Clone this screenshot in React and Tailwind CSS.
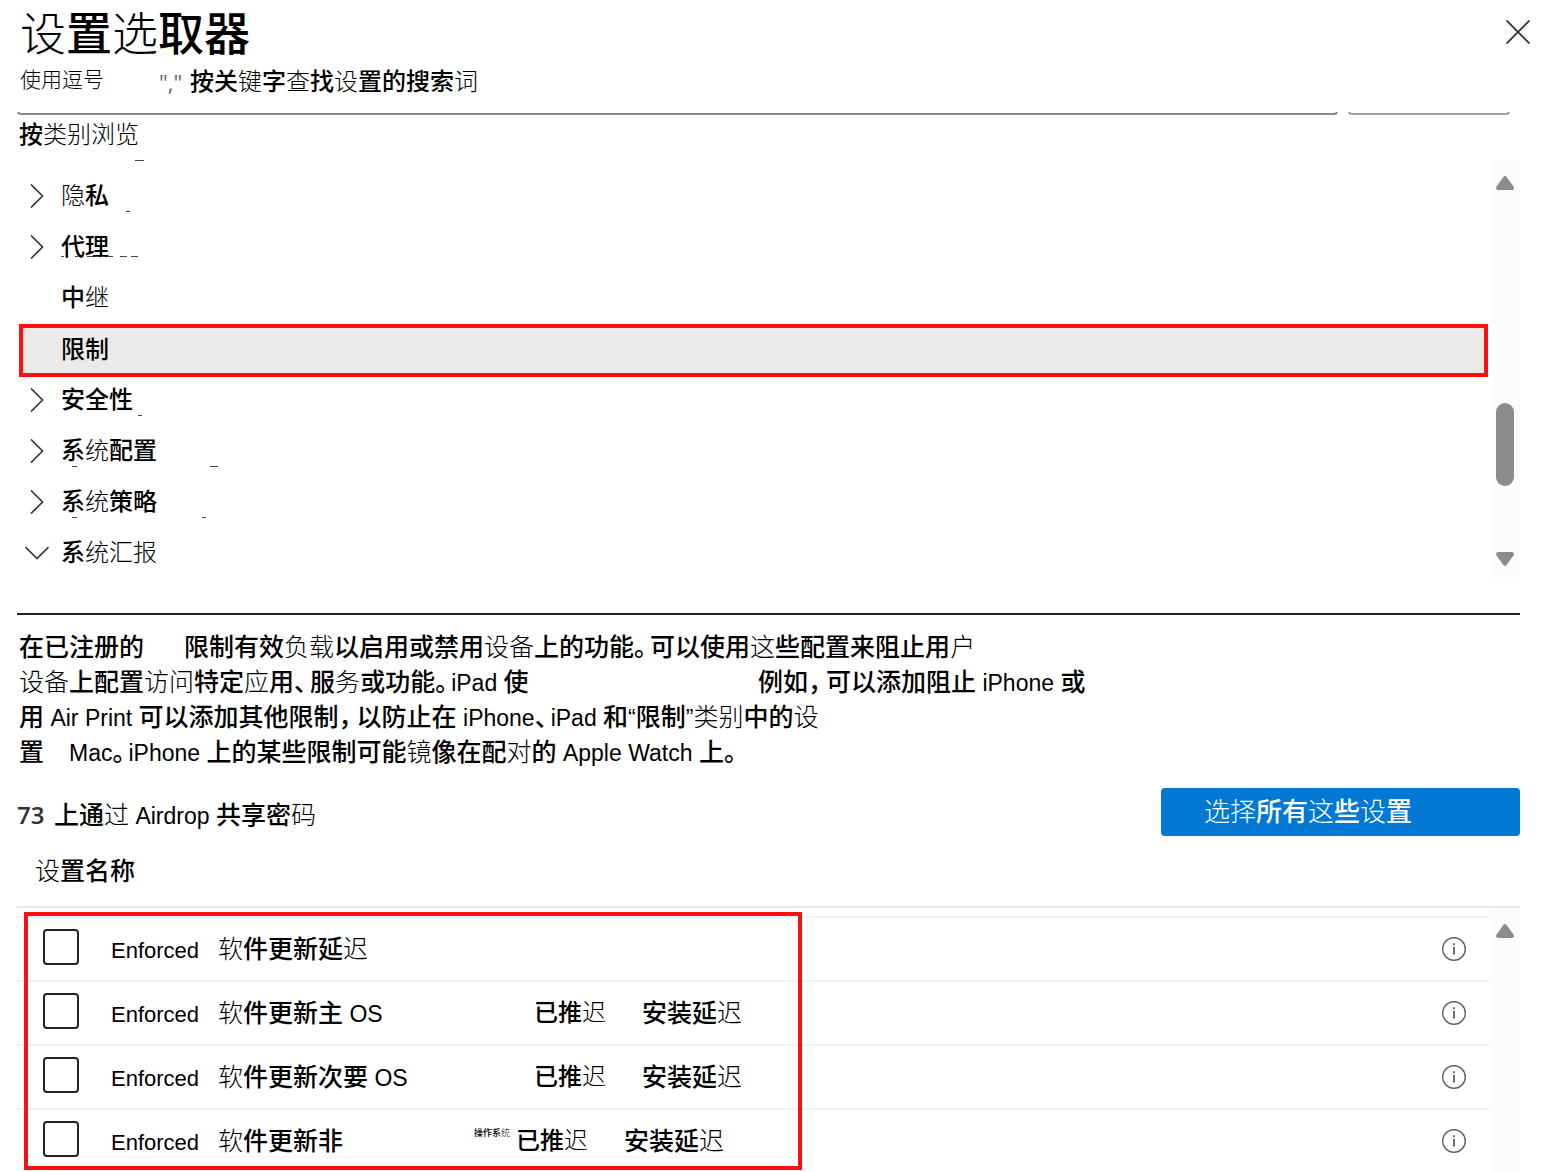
import React from 'react';
import clsx from 'clsx';

const LIGHT = /([设选键查词类别浏览隐继统汇报负载备访问应务这户镜对过码择软迟]+)/;
const TOKENS = /( ?[A-Za-z“”]+(?: [A-Za-z]+)* ?|[。、，])/;

function Han({ text }) {
  return text.split(LIGHT).map((part, i) =>
    i % 2 ? <span key={i} className="font-light">{part}</span> : part
  );
}

function Mixed({ text }) {
  return text.split(TOKENS).map((part, i) => {
    if (i % 2 === 0) return <Han key={i} text={part} />;
    if ('。、，'.includes(part)) {
      return (
        <span
          key={i}
          className={clsx("inline-block leading-none [font-feature-settings:'halt']", part === '，' ? 'w-[18px]' : 'w-4')}
        >
          {part}
        </span>
      );
    }
    return <span key={i} className="text-[23px] font-normal leading-none">{part}</span>;
  });
}

const categories = [
  { name: '隐私', icon: 'right', marks: 'M135-11h9M126 40h4' },
  { name: '代理', icon: 'right', marks: 'M61 34h3M75 34h3M87 34h6M95 34h4M101 34h4M107 34h6M120 34h7M131 34h7' },
  { name: '中继' },
  { name: '限制', selected: true },
  { name: '安全性', icon: 'right', marks: 'M138 40h4' },
  { name: '系统配置', icon: 'right', marks: 'M72 40h5M210 40h8' },
  { name: '系统策略', icon: 'right', marks: 'M72 40h5M202 40h4' },
  { name: '系统汇报', icon: 'down' },
];

const settings = [
  { id: 'delay', name: '软件更新延迟' },
  { id: 'major', name: '软件更新主 OS', width: 'w-[316px]', state: '已推迟', action: '安装延迟' },
  { id: 'minor', name: '软件更新次要 OS', width: 'w-[316px]', state: '已推迟', action: '安装延迟' },
  { id: 'non', name: '软件更新非', width: 'w-[256px]', note: '操作系统', state: '已推迟', action: '安装延迟' },
];

function Chevron({ direction }) {
  return (
    <svg viewBox="0 0 24 24" className="size-6 shrink-0" fill="none" stroke="#3b3a39" strokeWidth="1.7">
      <path d={direction === 'down' ? 'M.5 6 12 17.500 23.500 6' : 'M6 .5 17.500 12 6 23.500'} />
    </svg>
  );
}

function Arrow({ down }) {
  return (
    <svg viewBox="0 0 18 14" className={clsx('h-[14px] w-[18px]', down && 'rotate-180')} fill="#8b8b8b">
      <path d="M7.200 1.200Q9-1 10.800 1.200L17.500 10.500Q18.800 13.800 15.800 14H2.200Q-.8 13.800.5 10.500Z" />
    </svg>
  );
}

function InfoIcon() {
  return (
    <svg viewBox="0 0 24 24" className="size-6" fill="none" stroke="#605e5c">
      <circle cx="12" cy="12" r="11.300" strokeWidth="1.400" />
      <path d="M12 9.800V17.500M12 6.300V8" strokeWidth="1.800" />
    </svg>
  );
}

function CategoryRow({ item }) {
  return (
    <li
      className={clsx(
        'relative flex items-center pb-[2px]',
        item.selected
          ? '-mb-0.5 ml-0.5 mr-0.5 h-[53px] border-4 border-[#ff1010] bg-[#ebeae9] pl-[38px]'
          : 'h-[51px] pl-2'
      )}
    >
      {!item.selected && <span className="mr-3 size-6">{item.icon && <Chevron direction={item.icon} />}</span>}
      <button type="button" className="text-2xl font-medium leading-8"><Han text={item.name} /></button>
      {item.marks && (
        <svg viewBox="17 0 400 51" className="pointer-events-none absolute left-0 top-0 h-[51px] w-[400px] overflow-visible" stroke="#444">
          <path d={item.marks} transform="translate(0 .5)" />
        </svg>
      )}
    </li>
  );
}

export default function App() {
  return (
    <main className="bg-white pl-[17px] pr-[22px] font-['Liberation_Sans','Noto_Sans_CJK_SC',sans-serif] font-medium text-black">
      <header className="flex items-start justify-between">
        <div className="pl-[3px] pt-[9px]">
          <h1 className="text-[46px] font-medium leading-[50px]"><Han text="设置选取器" /></h1>
          <p className="flex h-[53px] items-start pt-[5px] text-2xl leading-9">
            <span className="w-[139px] text-[21px] font-light leading-8">使用逗号</span>
            <span className="w-[31px] font-['Open_Sans',sans-serif] text-[22px] font-normal text-[#666]">","</span>
            <span><Han text="按关键字查找设置的搜索词" /></span>
          </p>
        </div>
        <button type="button" aria-label="关闭" className="-mr-[10px] mt-5">
          <svg viewBox="0 0 24 24" className="size-6" stroke="#323130" strokeWidth="1.8">
            <path d="M.5.5 23.500 23.500M23.500.5.5 23.500" />
          </svg>
        </button>
      </header>

      <div className="flex h-[3px] items-end gap-[10px] overflow-hidden pr-[10px]">
        <input aria-label="搜索" className="h-10 min-w-0 flex-1 rounded-[4px] border-2 border-[#8a8886]" />
        <button type="button" aria-label="查找" className="h-10 w-[162px] rounded-[4px] border-2 border-[#a19f9d]" />
      </div>

      <h2 className="h-[45px] pl-[2px] pt-[2px] text-2xl font-medium leading-9"><Han text="按类别浏览" /></h2>

      <div className="flex h-[422px]">
        <ul className="relative flex-1 pt-[11px]">
          {categories.map((item) => <CategoryRow key={item.name} item={item} />)}
        </ul>
        <div className="flex w-[30px] flex-col items-center bg-[#fcfcfc] pb-4 pt-4">
          <Arrow />
          <div className="mt-[213px] h-[83px] w-[18px] rounded-full bg-[#8b8b8b]" />
          <div className="mt-auto"><Arrow down /></div>
        </div>
      </div>

      <hr className="mt-[31px] border-t-2 border-[#252423]" />

      <div className="mt-[15px] grid auto-rows-[35px] whitespace-pre pl-[2px] text-[25px] leading-[35px]">
        <p className="flex">
          <span className="w-[165px]">在已注册的</span>
          <span><Mixed text="限制有效负载以启用或禁用设备上的功能。可以使用这些配置来阻止用户" /></span>
        </p>
        <p className="flex">
          <span className="w-[739px]"><Mixed text="设备上配置访问特定应用、服务或功能。iPad 使" /></span>
          <span><Mixed text="例如，可以添加阻止 iPhone 或" /></span>
        </p>
        <p><Mixed text="用 Air Print 可以添加其他限制，以防止在 iPhone、iPad 和“限制”类别中的设" /></p>
        <p className="flex">
          <span className="w-[50px]">置</span>
          <span><Mixed text="Mac。iPhone 上的某些限制可能镜像在配对的 Apple Watch 上。" /></span>
        </p>
      </div>

      <div className="mt-[18px] flex h-12 items-center justify-between">
        <p className="flex items-center pt-[6px] text-[25px] leading-9">
          <span className="w-[37px] font-['Open_Sans',sans-serif] text-2xl font-semibold text-[#323130]">73</span>
          <span><Mixed text="上通过 Airdrop 共享密码" /></span>
        </p>
        <button type="button" className="h-12 w-[359px] rounded-[4px] bg-[#0078d4] pl-[43px] text-left text-[26px] font-medium leading-9 text-white">
          <Han text="选择所有这些设置" />
        </button>
      </div>

      <section className="relative">
        <table className="w-full border-separate border-spacing-0">
          <thead>
            <tr>
              <th colSpan={3} className="h-[72px] border-b-2 border-[#eaeaea] pl-[18px] text-left text-[25px] font-medium leading-9">
                <Han text="设置名称" />
              </th>
            </tr>
            <tr aria-hidden="true"><td colSpan={3} className="h-2" /></tr>
          </thead>
          <tbody>
            {settings.map((row) => (
              <tr key={row.id} className="h-16">
                <td className="w-[94px] border-t-2 border-[#f1f1f1] pb-1 pl-[26px]">
                  <input id={row.id} type="checkbox" className="block size-9 appearance-none rounded-[4px] border-2 border-[#252423] bg-white" />
                </td>
                <td className="border-t-2 border-[#f1f1f1]">
                  <label htmlFor={row.id} className="flex items-center whitespace-pre text-[25px] leading-9">
                    <span className="w-[107px] pt-1 text-[22px] font-normal">Enforced</span>
                    <span className={row.width}><Mixed text={row.name} /></span>
                    {row.note && <span className="-mt-4 w-[42px] text-[9px] leading-5"><Han text={row.note} /></span>}
                    {row.state && <span className="w-[108px] text-2xl leading-9"><Han text={row.state} /></span>}
                    {row.action && <span><Han text={row.action} /></span>}
                  </label>
                </td>
                <td className="w-[78px] border-t-2 border-[#f1f1f1]">
                  <button type="button" aria-label="信息" className="block"><InfoIcon /></button>
                </td>
              </tr>
            ))}
          </tbody>
        </table>
        <div className="absolute bottom-0 right-0 top-[72px] flex w-[30px] justify-center bg-[#fcfcfc] pt-4">
          <Arrow />
        </div>
        <div className="pointer-events-none absolute bottom-[2px] left-[7px] top-[76px] w-[778px] border-4 border-[#ff1010]" />
      </section>
    </main>
  );
}
